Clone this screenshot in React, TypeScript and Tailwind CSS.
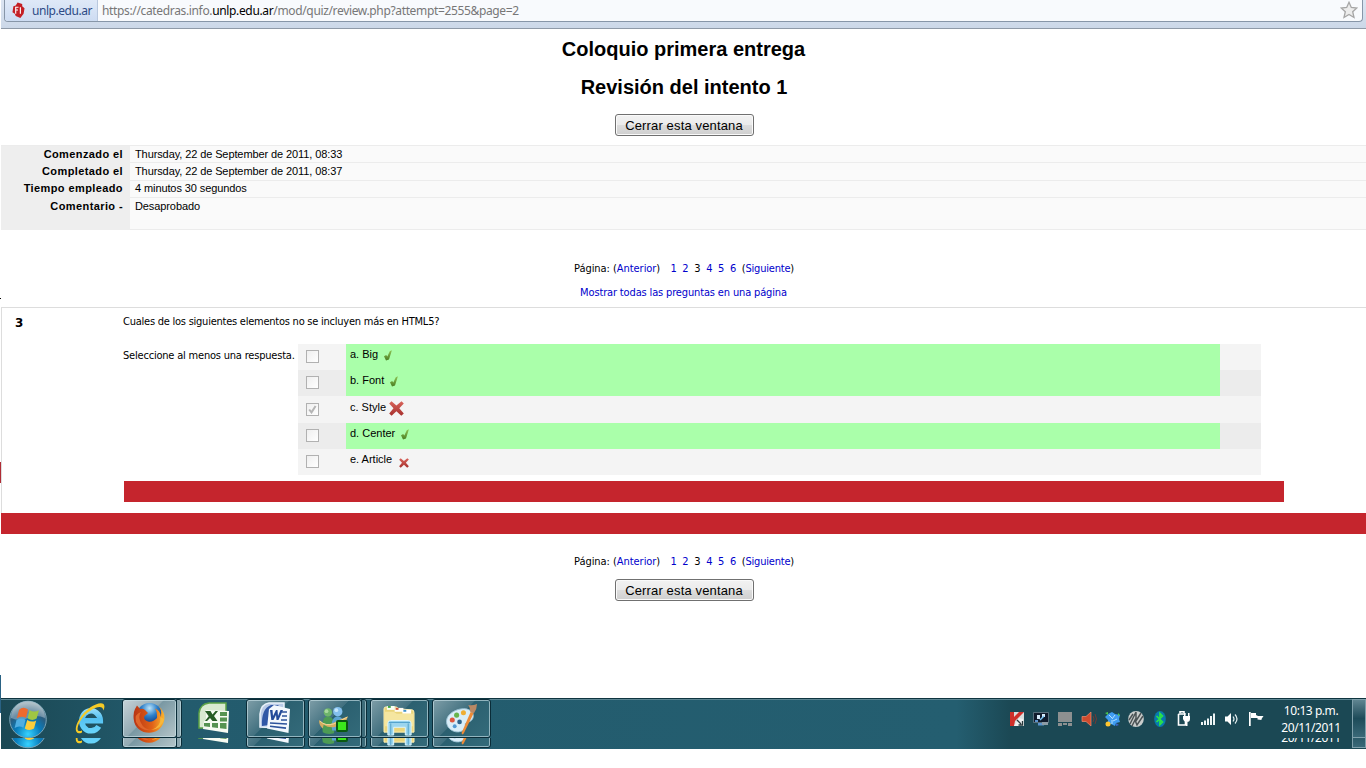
import React from "react";

const meta = [
  { label: "Comenzado el", value: "Thursday, 22 de September de 2011, 08:33", row: "h-[17px] leading-[17px]", ls: "tracking-[-0.1px]" },
  { label: "Completado el", value: "Thursday, 22 de September de 2011, 08:37", row: "h-[18px] leading-[17px]", ls: "tracking-[-0.1px]" },
  { label: "Tiempo empleado", value: "4 minutos 30 segundos", row: "h-[17px] leading-[15px]", ls: "tracking-[-0.1px]" },
  { label: "Comentario -", value: "Desaprobado", row: "h-[32px] leading-[17px]", ls: "tracking-[-0.1px]" },
];

const answers = [
  { text: "a. Big", mark: "tick", checked: false, good: true, h: "h-[26px]", bg: "bg-[#f4f4f4]" },
  { text: "b. Font", mark: "tick", checked: false, good: true, h: "h-[26px]", bg: "bg-[#ececec]" },
  { text: "c. Style", mark: "big", checked: true, good: false, h: "h-[27px] pt-[1px]", bg: "bg-[#f4f4f4]" },
  { text: "d. Center", mark: "tick", checked: false, good: true, h: "h-[26px]", bg: "bg-[#ececec]" },
  { text: "e. Article", mark: "small", checked: false, good: false, h: "h-[26px]", bg: "bg-[#f4f4f4]" },
];

function Mark({ kind }: { kind: string }) {
  if (kind === "tick")
    return (
      <svg className="ml-[5px] mt-[6px]" width="10" height="11" viewBox="0 0 10 11">
        <defs>
          <linearGradient id="tk" x1="0" y1="0" x2="0" y2="1">
            <stop offset="0" stopColor="#8fc455" />
            <stop offset="1" stopColor="#4a7d22" />
          </linearGradient>
        </defs>
        <path d="M1 6.200 L3.200 5 L4.300 6.600 L6.800 1.200 L8.900 0.300 L6 9.500 L3 10.600 Z" fill="url(#tk)" />
      </svg>
    );
  const big = kind === "big";
  return (
    <svg className={big ? "ml-[3px] mt-[4px]" : "ml-[7px] mt-[9px]"} width={big ? 15 : 10} height={big ? 15 : 10} viewBox="0 0 15 15">
      <defs>
        <linearGradient id="cr" x1="0" y1="0" x2="0" y2="1">
          <stop offset="0" stopColor="#d9655c" />
          <stop offset="1" stopColor="#a62f2c" />
        </linearGradient>
      </defs>
      <path d="M2.500 0.300 L7.400 4.500 L12.500 0.300 L14.800 2.400 L10.300 7.300 L14.800 12.400 L12.300 14.800 L7.400 10.300 L2.600 14.800 L0.200 12.400 L4.500 7.300 L0.200 2.600 Z" fill="url(#cr)" />
    </svg>
  );
}

function CheckBox({ checked }: { checked: boolean }) {
  return (
    <div className="ml-[8px] mt-[6px] flex size-[13px] items-center justify-center border border-[#b1b1b1] bg-gradient-to-br from-[#efefef] to-white">
      {checked && (
        <svg width="9" height="9" viewBox="0 0 9 9">
          <path d="M1.200 4.500 L3.500 7.400 L7.600 1" fill="none" stroke="#b5b5b5" strokeWidth="2" />
        </svg>
      )}
    </div>
  );
}

function CloseButton() {
  return (
    <button className="ml-[1px] h-[22px] w-[139px] rounded-[3px] border border-[#707070] bg-[linear-gradient(#f2f2f2_0%,#ebebeb_50%,#dddddd_50%,#cfcfcf_100%)] text-center text-[13px] leading-[21px] tracking-[0.15px] whitespace-nowrap text-black shadow-[inset_0_0_0_1px_#fafafa]">
      Cerrar esta ventana
    </button>
  );
}

function Pager() {
  return (
    <div className="flex h-[16px] w-[220px] whitespace-nowrap font-['DejaVu_Sans_Condensed','DejaVu_Sans',sans-serif] text-[11px] leading-[16px] tracking-[-0.2px] text-[#0000cc]">
      <span className="w-[96.500px] tracking-[-0.05px]">
        <span className="text-black">Página: (</span>Anterior<span className="text-black">)</span>
      </span>
      {["1", "2", "3", "4", "5", "6"].map((n) => (
        <span key={n} className={n === "3" ? "w-[11.900px] text-black" : "w-[11.900px]"}>{n}</span>
      ))}
      <span className="text-black">(</span>Siguiente<span className="text-black">)</span>
    </div>
  );
}

function Orb() {
  return (
    <svg className="ml-[7px] mt-[1px] shrink-0" width="40" height="39" viewBox="0 0 40 39">
      <defs>
        <radialGradient id="orb" cx="0.5" cy="0.9" r="0.85">
          <stop offset="0" stopColor="#37d2ff" />
          <stop offset="0.4" stopColor="#087dbd" />
          <stop offset="0.7" stopColor="#2a5d7f" />
          <stop offset="1" stopColor="#8da5b0" />
        </radialGradient>
      </defs>
      <circle cx="20" cy="19.500" r="18.300" fill="url(#orb)" stroke="#79a3b5" strokeWidth="1" />
      <path d="M3 18 A17 17 0 0 1 37 18 Q28 14 20 18 T3 18" fill="#fff" opacity=".3" />
      <path d="M11 10 Q15 6 20 9.500 L18 18 Q14 15.500 8.800 18.300 Z" fill="#ed6a2e" />
      <path d="M21.500 10 Q26 13 31 10.200 L28.600 18.600 Q24 21.300 19.600 18.300 Z" fill="#9fc643" />
      <path d="M8.500 20 Q13 17 17.600 19.800 L15.400 27.700 Q11 25 6.600 28 Z" fill="#4faee2" />
      <path d="M19.200 20 Q24 23 28.200 20.400 L26 28.600 Q21.500 31.500 16.800 28.500 Z" fill="#fccd3c" />
    </svg>
  );
}

function IE() {
  return (
    <svg width="30" height="33" viewBox="0 0 30 33">
      <defs>
        <linearGradient id="ie" x1="0" y1="0" x2="0" y2="33" gradientUnits="userSpaceOnUse">
          <stop offset="0" stopColor="#c4f0ff" />
          <stop offset=".5" stopColor="#55c1f2" />
          <stop offset="1" stopColor="#6bd8fc" />
        </linearGradient>
      </defs>
      <path d="M9 18.800 H25.300 A9.300 10 0 1 0 23.800 24.300" fill="none" stroke="url(#ie)" strokeWidth="5.500" />
      <path d="M7 30.500 C0 34 -1.500 26 4.500 17 C11 6 24 -1 28.500 2 C30 3.500 29.500 6.500 28.300 8.500 C28 0 12 8 6 18 C1.500 25 1 31 7 28.500 Z" fill="#f5ca26" />
    </svg>
  );
}

function Firefox() {
  return (
    <svg width="32" height="32" viewBox="0 0 32 32">
      <defs>
        <radialGradient id="fg" cx=".5" cy=".2" r=".6">
          <stop offset="0" stopColor="#bde5fa" />
          <stop offset=".5" stopColor="#2d80ca" />
          <stop offset="1" stopColor="#123a83" />
        </radialGradient>
        <linearGradient id="ff" x1="0" y1="0" x2="1" y2="0">
          <stop offset="0" stopColor="#b83413" />
          <stop offset=".6" stopColor="#e06118" />
          <stop offset="1" stopColor="#fbb52f" />
        </linearGradient>
      </defs>
      <circle cx="16.500" cy="14" r="13" fill="url(#fg)" />
      <path d="M2 7 L4 3.500 L7 7 Q10 6 12 8 L15 11 L11.500 14 Q10 18 15 19.500 Q20 20.500 24 16 Q24.500 10 22 6.500 Q28 9 27.500 15 Q29.500 9 26 4.500 Q33 11 31 19 C27 36 2 34 .7 17 Q0 11 2 7Z" fill="url(#ff)" />
      <path d="M3 20 Q8 30 19 28 Q11 28 7.500 20 Q5 14 8 10 Q1 12 3 20" fill="#e0662c" />
      <path d="M27.500 15 Q28 25 18 28 Q29 27 31 17" fill="#f9bd3d" opacity=".8" />
    </svg>
  );
}

function Excel() {
  return (
    <svg width="32" height="32" viewBox="0 0 32 32">
      <path d="M1 25 V11 Q2 2 11 1 H28 V18 L20 26 H1Z" fill="#d9e9d0" stroke="#5ba146" strokeWidth="1.500" />
      <path d="M8 8 L31 9 L30 31 L5 27 L6 19 H8Z" fill="#f6fbf2" />
      <path d="M7 9 L12.500 9 L14.500 12.500 L17.500 9 H20 L16 14 L19.500 19 H14.500 L12 16 L9 19 H7 L10.700 14.200 Z" fill="#275d25" />
      <path d="M22 10h7v4h-7zM22 15.500h7v4h-7zM6 21h6v4l-6-.7zM14 21h6v5l-6-.8zM22 21h6.500v6l-6.500-.7z" fill="#569352" />
    </svg>
  );
}

function Word() {
  return (
    <svg width="32" height="32" viewBox="0 0 32 32">
      <path d="M1 25 V12 Q2 2 10 1 H25 V26Z" fill="#b9cae6" stroke="#e9f2fa" strokeWidth="1.500" />
      <path d="M3 24 Q2 7 12 3 H20 L10 10 V23Z" fill="#3058a6" />
      <path d="M15 3 L31 7 L29.500 31 L8 26.500 L10 7Z" fill="#f3f8fd" />
      <path d="M11 8 L13.500 8 L14 14 L17 8 H18.500 L19 14 L21.500 8 H24 L19.500 18 H17.500 L17 13 L14.500 18 H12.300Z" fill="#234b99" />
      <path d="M23 10h5M23 14h5M22 18h6M11 21l17 1M11 24.300l16 1.800" stroke="#2d539c" strokeWidth="1.600" />
    </svg>
  );
}

function Messenger() {
  return (
    <svg width="32" height="30" viewBox="0 0 34 32">
      <path d="M5 28 Q3 11 11 11 Q19 12 17 29 Q10 31 5 28" fill="#4d9c54" />
      <circle cx="10.500" cy="6.800" r="4.500" fill="#6eb56b" />
      <circle cx="9" cy="5.500" r="2" fill="#a8d89d" />
      <path d="M15 26 Q13 12 21 11 Q29 12 28 26Z" fill="#5ba4d2" />
      <circle cx="21" cy="6" r="5" fill="#83bfed" />
      <circle cx="19.500" cy="4.500" r="2" fill="#c5e6fb" />
      <path d="M1 15 Q8 22 16 18 Q24 14 32 11 Q30 19 19 22 Q12 24 6 20 L5 24 Q1 21 1 15" fill="#d5ad60" />
      <path d="M2 16 Q8 22 17 19 Q25 15 31 12" stroke="#f2db9c" fill="none" />
    </svg>
  );
}

function Explorer() {
  return (
    <svg width="32" height="31" viewBox="1 2 33 32">
      <path d="M2 30 V6 Q2 4 4 4 H15 L17 6 L31 7 Q33 7 33 10 V30Z" fill="#ead57b" stroke="#fff1b5" />
      <path d="M5 3h8v4H5z" fill="#fafff5" /><path d="M6 3h3v2H6z" fill="#43a944" />
      <path d="M13 5h9v4h-9z" fill="#fffdf5" /><path d="M14 5h3v2h-3z" fill="#cf5337" />
      <path d="M21 7h9v4h-9z" fill="#fff" /><path d="M22 7h3v2h-3z" fill="#3f91cb" />
      <path d="M3 9h9l3 2h17v13H3z" fill="#f5e6a0" />
      <path d="M6 33 V21 Q6 18 9 18 H27 Q30 18 30 21 V33 H24 V25 H12 V33Z" fill="#9bd5ee" stroke="#dcf6ff" strokeWidth="1" />
      <path d="M7 20h22M9 21v12M27 21v12" stroke="#4d9fc9" />
    </svg>
  );
}

function Paint() {
  return (
    <svg width="33" height="33" viewBox="0 0 34 34">
      <path d="M2 22 C-1 12 12 5 21 6 C31 7 32 18 23 20 C18 21 24 25 19 28 C13 32 4 29 2 22Z" fill="#d9edf8" stroke="#9dc3d5" />
      <circle cx="7.500" cy="17.500" r="2.600" fill="#df563e" />
      <circle cx="12" cy="12.500" r="2.600" fill="#67b44b" />
      <circle cx="19" cy="10" r="2.600" fill="#efae34" />
      <circle cx="15" cy="19.500" r="2.400" fill="#2d638c" />
      <circle cx="10" cy="24" r="2" fill="#539ad3" />
      <path d="M17 31 L26.500 9 L29.500 10.500 L19.500 31 Q18 34 17 31" fill="#ec8b38" />
      <path d="M26 9 Q26 5 24 2 Q28 3 33 1 Q33 6 29.800 10.500Z" fill="#b98864" />
    </svg>
  );
}

function TaskButton({ children, stack, active, w, pad }: { children: React.ReactNode; stack?: boolean; active?: boolean; w: string; pad: string }) {
  return (
    <div className={`flex h-[39px] shrink-0 ${w}`}>
      <div className={`relative flex flex-1 items-start rounded-[3px] border border-[#0a2c38] shadow-[inset_0_0_0_1px_rgba(200,225,230,.65)] ${pad} ${active ? "bg-[linear-gradient(135deg,#c7d3d8_0%,#91a9b2_45%,#7998a3_46%,#b4c5c9_100%)]" : "bg-[linear-gradient(135deg,#7f9ea8_0%,#41707f_45%,#2b6070_46%,#346b7a_100%)]"}`}>
        {children}
      </div>
      {stack && (
        <div className={`-ml-[1px] w-[6px] rounded-r-[3px] border border-[#0a2c38] shadow-[inset_-1px_0_0_0_rgba(200,225,230,.6)] ${active ? "bg-[#8ba6af]" : "bg-[#3d6b79]"}`} />
      )}
    </div>
  );
}

function Tray() {
  const c = "mr-[7.900px] shrink-0";
  return (
    <div className="ml-[518px] mt-[12px] flex w-[263px] shrink-0">
      <svg className={c} width="16" height="16" viewBox="0 0 16 16">
        <path d="M1 1h14v14H1z" fill="#d9dede" />
        <path d="M1 1h4v5l5-5h5L8 8l-2 2-1 5H1z" fill="#cf2f2a" />
        <path d="M5 15l5-8 4 1v7z" fill="#eef0f0" />
        <path d="M8 9l4 4M13.500 10v4H9.500" stroke="#29383c" strokeWidth="1.300" fill="none" />
      </svg>
      <svg className={c} width="16" height="16" viewBox="0 0 16 16">
        <path d="M0.500 1.500h15v10h-15z" fill="#101b2c" stroke="#758b98" strokeWidth=".7" />
        <path d="M4 4h3v4H4zM9 3h3v3H9z" fill="#d8ecfb" /><path d="M7 9l4-4" stroke="#7ac5f5" fill="none" strokeWidth="1.500" />
        <path d="M2 9h3v2H2zM5 12h6v2.500H5z" fill="#5a93ce" /><path d="M9 11h6v3H9z" fill="#8c9ba5" />
      </svg>
      <svg className={c} width="16" height="16" viewBox="0 0 16 16">
        <path d="M1 1h14v10H1zM1 12h4v3H1zM11 12h4v3h-4zM6 12h4v2H6z" fill="#8d9090" />
      </svg>
      <svg className={c} width="16" height="16" viewBox="0 0 16 16">
        <path d="M1 5.500h4L10 1v14l-5-4.500H1z" fill="#cf4b2d" stroke="#f08d70" strokeWidth=".7" />
        <path d="M12 5q2 3 0 6M14 3q3 5 0 10" stroke="#713b34" fill="none" />
      </svg>
      <svg className={c} width="16" height="16" viewBox="0 0 16 16">
        <path d="M3 3L7 1l3 2 5 1-1 4 1 3-4 1-1 3-4-2-3 1V9L0 6z" fill="#3f9cf0" />
        <path d="M4 4l3 3M10 4l-3 4M12 8l-4 2M7 9v4" stroke="#b5e1ff" />
        <path d="M0 2l3-1v3zM13 2l2 2-2 1z" fill="#4bc74c" /><circle cx="3" cy="13" r="2.500" fill="#ffc62e" /><path d="M11 12l3 2-3 1z" fill="#3b64c8" />
      </svg>
      <svg className={c} width="16" height="16" viewBox="0 0 16 16">
        <ellipse cx="8" cy="8" rx="7.800" ry="8" fill="#c9cdcc" />
        <path d="M2 13L8 1v9l5-8M4 15l3-6 2 5 6-9M1 9l4-6" stroke="#4b5355" fill="none" strokeWidth="1.500" />
      </svg>
      <svg className={c} width="16" height="16" viewBox="0 0 16 16">
        <ellipse cx="8" cy="8" rx="5.800" ry="8" fill="#087aae" />
        <path d="M4.500 5l6 6L8 13.500v-11L10.500 5l-6 6" fill="none" stroke="#2be348" strokeWidth="1.700" />
      </svg>
      <svg className={c} width="16" height="16" viewBox="0 0 16 16">
        <path d="M2.500 3v11h7V10M2.500 3h7M4 2V.7h4V2" fill="none" stroke="#fff" strokeWidth="1.600" />
        <path d="M7 5h7v3q0 3-3 3T7 8zM8 2h1.500v3H8zM12 2h1.500v3H12zM10 11h1.500v4H10z" fill="#fff" />
      </svg>
      <svg className={c} width="16" height="16" viewBox="0 0 16 16">
        <path d="M1 11h2v3H1zM4 9.500h2V14H4zM7 7.500h2V14H7zM10 5h2v9h-2zM13 2.500h2V14h-2z" fill="#eef4f5" />
      </svg>
      <svg className={c} width="16" height="16" viewBox="0 0 16 16">
        <path d="M1 5.500h2.500L7 2v12l-3.500-3.500H1z" fill="#fff" />
        <path d="M9 5.500q2 2.500 0 5M11 3.500q4 4.500 0 9" stroke="#e2edef" fill="none" strokeWidth="1.200" />
      </svg>
      <svg className="shrink-0" width="16" height="16" viewBox="0 0 16 16">
        <path d="M1 1h1.700v14H1zM3 2h5v2l2 1h5.500l-2 3 0 1-4-.5V7H3z" fill="#fff" />
      </svg>
    </div>
  );
}

function Bar({ time }: { time: boolean }) {
  return (
    <div className="flex h-[40px] w-[1365px] shrink-0 items-start">
      <Orb />
      <div className="ml-[27px] mt-[3px] w-[32px] shrink-0"><IE /></div>
      <TaskButton w="ml-[15px] w-[60px]" pad="pl-[10px] pt-[2px]" stack active><Firefox /></TaskButton>
      <div className="ml-[16px] mt-[3px] w-[32px] shrink-0"><Excel /></div>
      <TaskButton w="ml-[16px] w-[59px]" pad="pl-[12px] pt-[2px]"><Word /></TaskButton>
      <TaskButton w="ml-[3px] w-[59px]" pad="pl-[9px] pt-[6px]" stack>
        <Messenger />
        <span className="absolute top-[20px] left-[27px] size-[12px] rounded-[2px] border-2 border-[#0b5a12] bg-[#3be81c]" />
      </TaskButton>
      <TaskButton w="ml-[3px] w-[59px]" pad="pl-[12px] pt-[5px]"><Explorer /></TaskButton>
      <TaskButton w="ml-[3px] w-[59px]" pad="pl-[12px] pt-[3px]"><Paint /></TaskButton>
      <Tray />
      <div className="w-[78px] shrink-0 pt-[3px] text-center font-['Noto_Sans',sans-serif] text-[12px] leading-[17px] tracking-[-0.45px] whitespace-nowrap text-white">
        {time ? <div>10:13 p.m.</div> : <div className="h-[17px]" />}
        <div>20/11/2011</div>
      </div>
      <div className="ml-[2px] h-[39px] flex-1 border border-[#7fa0ab] bg-gradient-to-b from-[#5f8591] via-[#1d4b59] to-[#3a6978]" />
    </div>
  );
}

export default function App() {
  const tahoma = "font-['DejaVu_Sans_Condensed','DejaVu_Sans',sans-serif]";
  return (
    <div className="relative h-[768px] w-[1366px] overflow-hidden bg-white pl-[1px] font-['Liberation_Sans',Arial,sans-serif] text-black">
      <header className="flex h-[29px] items-start border-b border-[#8f9aa8] bg-gradient-to-b from-[#dce5f2] to-[#ccd8e8] pl-[3px] pr-[3px]">
        <div className="flex h-[22px] flex-1 overflow-hidden rounded-b-[4px] border border-t-0 border-[#8796a8] bg-[#f8fafd] font-['Noto_Sans',sans-serif] text-[12px] leading-[22px] whitespace-nowrap">
          <div className="flex w-[93px] border-r border-[#b9c8de] bg-gradient-to-b from-[#dfe9f8] to-[#cddcf2] text-[#2c4a85]">
            <svg className="mt-[2px] ml-[7px]" width="13" height="17" viewBox="0 0 14 17">
              <path d="M6 0 L11 1.500 L11 4 L13.500 6 L12.500 12 L9 16.500 L4 14.500 L3 12 L0.500 10.500 L1.500 4 L4 3Z" fill="#c42026" />
              <path d="M4 12V5h3M4 8h2.500M9 5v7" stroke="#fff" fill="none" strokeWidth="1.200" />
            </svg>
            <span className="ml-[7px] tracking-[-0.45px]">unlp.edu.ar</span>
          </div>
          <div className="pl-[4px] tracking-[-0.35px] text-[#777]">https://catedras.info.<span className="text-black">unlp.edu.ar</span>/mod/quiz/review.php?attempt=2555&amp;page=2</div>
          <svg className="mt-[1px] mr-[4px] ml-auto" width="18" height="18" viewBox="0 0 18 18">
            <path d="M9 1.300 L11.300 6.500 L16.800 7 L12.700 10.700 L14 16.500 L9 13.500 L4 16.500 L5.300 10.700 L1.200 7 L6.700 6.500Z" fill="#ececec" stroke="#a6a6a6" strokeWidth="1.300" />
          </svg>
        </div>
      </header>

      <main className="h-[669px]">
        <h1 className="pt-[8px] text-center text-[20px] leading-[24px] font-bold">Coloquio primera entrega</h1>
        <h2 className="mt-[14px] pl-[1px] text-center text-[20px] leading-[24px] font-bold">Revisión del intento 1</h2>
        <div className="mt-[15px] flex h-[22px] justify-center"><CloseButton /></div>

        <div className="mt-[9px] border-t border-[#ececec] text-[11px]">
          {meta.map((m) => (
            <div key={m.label} className={`flex whitespace-nowrap ${m.row}`}>
              <div className="w-[129px] bg-[#eee] pr-[7px] text-right font-bold tracking-[0.4px]">{m.label}</div>
              <div className={`flex-1 border-b border-[#ececec] bg-[#fafafa] pl-[5px] ${m.ls}`}>{m.value}</div>
            </div>
          ))}
        </div>

        <div className="mt-[31px] flex justify-center pl-[1px]"><Pager /></div>
        <div className={`mt-[8px] text-center text-[11px] leading-[16px] tracking-[-0.150px] text-[#0000cc] ${tahoma}`}>Mostrar todas las preguntas en una página</div>

        <section className="mt-[6px] h-[206px] border-t border-l border-[#ddd]">
          <div className="flex">
            <div className={`w-[121px] pt-[7px] pl-[13px] text-[12px] leading-[16px] font-bold font-['DejaVu_Sans',sans-serif]`}>3</div>
            <div className={`text-[11px] leading-[16px] tracking-[-0.240px] whitespace-nowrap ${tahoma}`}>
              <div className="pt-[6px]">Cuales de los siguientes elementos no se incluyen más en HTML5?</div>
              <div className="mt-[14px] flex">
                <div className="w-[175px] pt-[4px] tracking-[-0.2px]">Seleccione al menos una respuesta.</div>
                <div className="font-['Liberation_Sans',Arial,sans-serif] tracking-normal">
                  {answers.map((a) => (
                    <div key={a.text} className={`flex items-start ${a.h} ${a.bg}`}>
                      <div className="w-[48px]"><CheckBox checked={a.checked} /></div>
                      <div className={`flex h-full w-[874px] items-start pl-[4px] ${a.good ? "bg-[#aaffaa]" : ""}`}>
                        <span className="pt-[2px]">{a.text}</span>
                        <Mark kind={a.mark} />
                      </div>
                      <div className="w-[41px]" />
                    </div>
                  ))}
                </div>
              </div>
              <div className="mt-[6px] ml-[1px] h-[21px] w-[1160px] bg-[#c5252d]" />
            </div>
          </div>
        </section>
        <div className="h-[21px] bg-[#c5252d]" />

        <div className="mt-[20px] flex justify-center pl-[1px]"><Pager /></div>
        <div className="mt-[9px] flex h-[22px] justify-center"><CloseButton /></div>
      </main>

      <footer className="bg-[linear-gradient(90deg,#1b4854_0%,#235b6d_12%,#245e70_70%,#1b4854_74%,#1b4854_100%)]">
        <div className="h-[40px] overflow-hidden border-t border-[#0f3540] shadow-[inset_0_1px_0_0_#5c8693]"><Bar time /></div>
        <div className="flex h-[11px] flex-col justify-end overflow-hidden"><Bar time={false} /></div>
      </footer>

      <div className="absolute top-[298px] left-0 h-[1px] w-[1px] bg-black" />
      <div className="absolute top-[462px] left-0 h-[21px] w-[1px] bg-[#b02c35]" />
      <div className="absolute top-[675px] left-0 h-[38px] w-[1px] bg-[#2a6284]" />
    </div>
  );
}
